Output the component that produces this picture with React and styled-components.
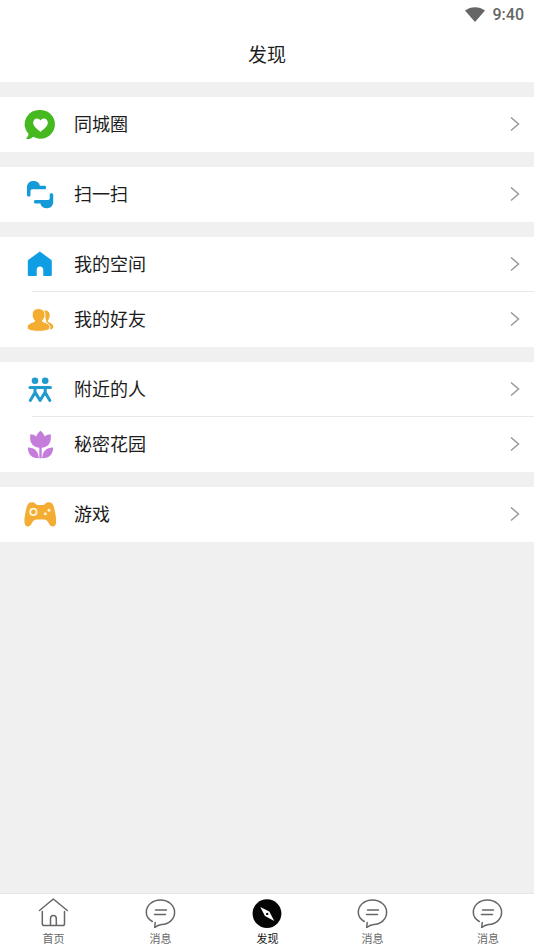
import React, { useState } from "react";
import styled, { createGlobalStyle } from "styled-components";

const GlobalStyle = createGlobalStyle`
  * {
    box-sizing: border-box;
  }
  body {
    margin: 0;
    background: #f0f0f0;
    color: #1c1c1c;
    font-family: Roboto, "Noto Sans CJK SC", sans-serif;
  }
`;

const CircleIcon = () => (
  <svg viewBox="0 0 32 32">
    <path fill="#45b91f" d="M16.800 1a14.400 14.400 0 1 1-7.600 26.800c-1.800 1.700-4 2.600-6.200 2.300-.8-.1-.9-.9-.3-1.400 1-.8 1.600-2 1.800-3.600A14.400 14.400 0 0 1 16.800 1z" />
    <path fill="#fff" d="M16.500 23C12.200 19.400 9.200 17 9.200 13.600c0-2.300 1.700-4 3.800-4 1.500 0 2.700.8 3.500 2 .8-1.200 2-2 3.500-2 2.100 0 3.800 1.700 3.800 4 0 3.400-3 5.800-7.300 9.400z" />
  </svg>
);

const ScanIcon = () => (
  <svg viewBox="0 0 32 32" fill="#149bd7">
    <path d="M3 16V8.500C3 4.500 5.500 2 9 2c4.200 0 6.200 1.500 6.800 4.700h4.700c1.100 0 1.600.7 1.600 1.700s-.5 1.800-1.600 1.800H8.500c-1.300 0-1.900.6-2 1.800v4c0 1-.7 1.500-1.700 1.500S3 17 3 16z" />
    <path d="M29.200 15.800v7c0 4-2.500 6.400-6 6.400-4 0-6.200-1.500-6.800-4.700h-4.900c-1.100 0-1.600-.7-1.600-1.700s.5-1.800 1.600-1.800h12.200c1.300 0 1.900-.6 2-1.800v-3.400c0-1 .7-1.500 1.700-1.500s1.800.5 1.800 1.500z" />
  </svg>
);

const HouseIcon = () => (
  <svg viewBox="0 0 32 32">
    <path fill="#0f9de4" d="M15.800 2.500 27.100 10.800c.5.400.7.8.7 1.400v13.400c0 1-.5 1.500-1.500 1.500h-7v-6.200c0-2.100-1.200-3.400-3.300-3.400s-3.300 1.300-3.300 3.400v6.200H5.300c-1 0-1.500-.5-1.500-1.500V12.200c0-.6.200-1 .7-1.400z" />
  </svg>
);

const FriendsIcon = () => (
  <svg viewBox="0 0 32 32" fill="#f3ae32">
    <path d="M19.500 6.800c4.200-1 6.600 1.700 6.200 5.300-.2 1.800-.9 3.200-1.800 4.300-.4.600-.1 1.200.6 1.500 2.900 1.100 4.900 2.700 4.900 4.900 0 1.500-1 2.400-2.900 2.400h-2z" />
    <path stroke="#fff" strokeWidth="1" d="M14.200 4.600c4.600 0 7 2.800 6.800 6.700-.1 2-1 3.700-2.200 5-.5.600-.3 1.200.4 1.500 4.200 1.100 6.600 2.900 6.600 5.400 0 2.700-3.200 4.100-11.300 4.100-7.900 0-11.300-1.400-11.300-4.100 0-2.500 2.600-4.300 6.700-5.400.8-.3 1-.9.500-1.500-1.300-1.300-2.100-3-2.200-5-.2-3.900 2.200-6.700 6-6.700z" />
  </svg>
);

const PeopleIcon = () => (
  <svg viewBox="0 0 32 32" fill="none" stroke="#1f9bcd" strokeWidth="3" strokeLinecap="round" strokeLinejoin="round">
    <circle cx="11" cy="6.800" r="3.300" fill="#1f9bcd" stroke="none" />
    <circle cx="21.200" cy="6.800" r="3.300" fill="#1f9bcd" stroke="none" />
    <path d="M6 13.500h20.500" />
    <path d="M11 14v4.500L6.300 26.500M21.200 14v4.500l4.700 8M11 18l5.100 8.500 5.100-8.500" />
  </svg>
);

const TulipIcon = () => (
  <svg viewBox="0 0 32 32" fill="#c57ddb">
    <path d="M16.500 1.800c2.200 1.600 3.500 3.500 4.100 5.700 1.800-1.500 3.800-2.200 6.100-2.200.4 3.300.2 6.200-.9 8.500-1.600 3.300-4.700 5-9.300 5s-7.700-1.700-9.300-5c-1.100-2.300-1.300-5.200-.9-8.500 2.300 0 4.300.7 6.100 2.200.6-2.200 1.900-4.100 4.100-5.700z" />
    <path d="M15.300 17h2.400v12.200h-2.400z" />
    <path d="M3.800 18.600c6.500-.2 10.700 3.500 11 10.700-6.500.3-10.900-3.600-11-10.700zM29.200 18.600c-6.500-.2-10.700 3.500-11 10.700 6.500.3 10.900-3.600 11-10.700z" />
  </svg>
);

const GameIcon = () => (
  <svg viewBox="0 0 32 32">
    <path fill="#f4ad32" d="M8 3.300c1.700 0 2.800.6 3.700 1.700.6.700 1.200 1 2.100 1h5.100c.9 0 1.500-.3 2.100-1 .9-1.100 2-1.700 3.700-1.700 3 0 4.500 1.900 5.300 5.200 1 4.300 2.200 9.200 2.200 13.500 0 3.500-1.200 5.500-3.500 5.500-2 0-3-1.500-4-3.500-1.300-2.500-2.800-3.600-5-3.600h-6.800c-2.200 0-3.700 1.100-5 3.600-1 2-2 3.500-4 3.500-2.300 0-3.500-2-3.500-5.500 0-4.300 1.200-9.200 2.200-13.500.8-3.300 2.400-5.200 5.400-5.200z" />
    <circle cx="9.400" cy="12.900" r="3.200" fill="none" stroke="#fff6dc" strokeWidth="1.800" />
    <circle cx="25" cy="11.300" r="1.500" fill="#fff3d0" />
    <circle cx="21.300" cy="14.700" r="1.500" fill="#fff3d0" />
  </svg>
);

const TabHouse = () => (
  <svg viewBox="0 0 32 32" fill="none" stroke="#666" strokeWidth="1.500" strokeLinecap="round" strokeLinejoin="round">
    <path d="M1.500 14.500 15.300 3l14 11.500M4.300 15.500v12.300c0 1.300.5 1.800 1.800 1.800h18.600c1.300 0 1.800-.5 1.800-1.800V15.500" />
    <path d="M12.500 29.300v-6.500c0-2 1-3.200 2.900-3.200s2.900 1.200 2.900 3.200v6.500" />
  </svg>
);

const TabMessage = () => (
  <svg viewBox="0 0 32 32" fill="none" stroke="#666" strokeWidth="1.500" strokeLinecap="round" strokeLinejoin="round">
    <path d="M7.300 25.500C3.600 23.500 1.300 20.300 1.300 16.300 1.300 9.300 7.500 4 15.400 4s14.200 5.300 14.200 12.300c0 6.900-5.600 11.900-12.900 12.200-2.900.3-5 1.300-7 3l.5-5" />
    <path d="M10.500 14h11M9.500 18.500h11" />
  </svg>
);

const TabCompass = () => (
  <svg viewBox="0 0 32 32">
    <circle cx="15" cy="17.600" r="14.400" fill="#050505" />
    <path fill="#fff" d="M8.200 11 17.300 15.600l5 9.400-9.300-5z" />
    <circle cx="15.200" cy="17.900" r="1.200" fill="#050505" />
  </svg>
);

const groups = [
  [{ name: "同城圈", icon: <CircleIcon /> }],
  [{ name: "扫一扫", icon: <ScanIcon /> }],
  [
    { name: "我的空间", icon: <HouseIcon /> },
    { name: "我的好友", icon: <FriendsIcon /> },
  ],
  [
    { name: "附近的人", icon: <PeopleIcon /> },
    { name: "秘密花园", icon: <TulipIcon /> },
  ],
  [{ name: "游戏", icon: <GameIcon /> }],
];

const tabs = [
  { name: "首页", icon: <TabHouse /> },
  { name: "消息", icon: <TabMessage /> },
  { name: "发现", icon: <TabCompass /> },
  { name: "消息", icon: <TabMessage /> },
  { name: "消息", icon: <TabMessage /> },
];

const App = () => {
  const [active, setActive] = useState(2);

  return (
    <>
      <GlobalStyle />
      <Page>
        <Header>
          <StatusBar>
            <Wifi viewBox="0 0 20 15">
              <path fill="#666" d="M10 15 0 3.500C5.500-1 14.500-1 20 3.500z" />
            </Wifi>
            <span>9:40</span>
          </StatusBar>
          <Title>发现</Title>
        </Header>

        <Main>
          {groups.map((group) => (
            <Group key={group[0].name}>
              {group.map((item) => (
                <Row key={item.name} href="#">
                  <Icon>{item.icon}</Icon>
                  <Name>{item.name}</Name>
                  <Arrow viewBox="0 0 14 16">
                    <path d="M3 0.500 10.500 7 3 13.500" />
                  </Arrow>
                </Row>
              ))}
            </Group>
          ))}
        </Main>

        <TabBar>
          {tabs.map((tab, i) => (
            <Tab key={i} $active={i === active} onClick={() => setActive(i)}>
              {tab.icon}
              <span>{tab.name}</span>
            </Tab>
          ))}
        </TabBar>
      </Page>
    </>
  );
};

export default App;

const Page = styled.div`
  min-height: 100vh;
  display: flex;
  flex-direction: column;
`;

const Header = styled.header`
  background: #fff;
`;

const StatusBar = styled.div`
  height: 28px;
  padding: 0 10px;
  display: flex;
  align-items: center;
  justify-content: flex-end;
  gap: 8px;
  color: #666;
  font-size: 16px;
  font-weight: 500;
`;

const Wifi = styled.svg`
  width: 20px;
  height: 15px;
`;

const Title = styled.h1`
  margin: 0;
  height: 54px;
  line-height: 56px;
  font-size: 19px;
  font-weight: 400;
  text-align: center;
`;

const Main = styled.main`
  flex: 1;
  padding: 15px 0;
  display: flex;
  flex-direction: column;
  gap: 15px;
`;

const Row = styled.a`
  height: 55px;
  padding: 0 12px 0 24px;
  display: flex;
  align-items: center;
  color: inherit;
  text-decoration: none;

  &:not(:last-child) {
    background: linear-gradient(#e8e8e8, #e8e8e8) 32px 100% / 100% 1px no-repeat;
  }
`;

const Group = styled.section`
  background: #fff;
`;

const Icon = styled.span`
  width: 32px;
  height: 32px;
  margin-right: 18px;

  svg {
    display: block;
  }
`;

const Name = styled.span`
  flex: 1;
  font-size: 18px;
  line-height: 24px;
`;

const Arrow = styled.svg`
  width: 14px;
  height: 16px;
  fill: none;
  stroke: #999;
  stroke-width: 1.5;
`;

const TabBar = styled.nav`
  height: 56px;
  display: grid;
  grid-template-columns: repeat(3, 107fr) 103fr 110fr;
  background: #fff;
  border-top: 1px solid #e6e6e6;
`;

const Tab = styled.button`
  padding: 2px 0 0;
  border: 0;
  background: none;
  display: flex;
  flex-direction: column;
  align-items: center;
  gap: 4px;
  color: ${(props) => (props.$active ? "#111" : "#666")};
  font-family: inherit;
  font-size: 11px;
  line-height: 16px;
  cursor: pointer;

  svg {
    width: 32px;
    height: 32px;
  }

  &:last-child {
    padding-left: 18px;
  }
`;
